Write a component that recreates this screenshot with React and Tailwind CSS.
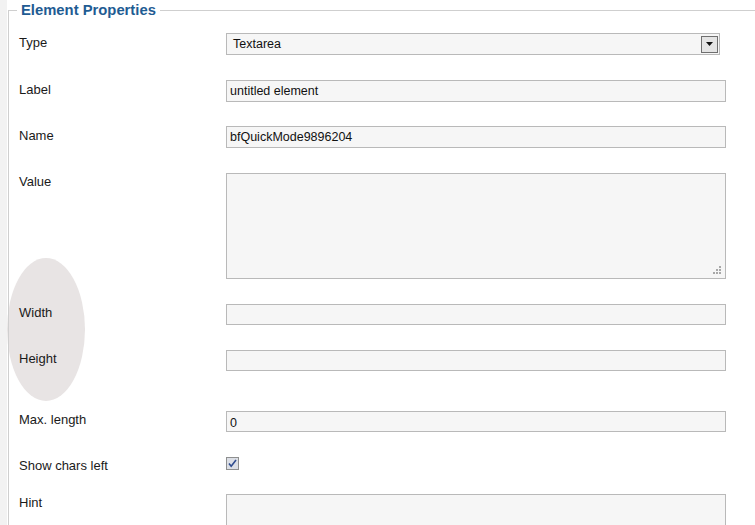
export default function App() {
  const inputBox =
    "h-[22px] w-[500px] border border-[#b9b9b9] bg-[#f6f6f6] px-[3px] text-[12.5px] leading-[21px] text-[#111]";
  const label = "w-[207px] pt-[1px] leading-[16px]";

  return (
    <div className="relative flex h-[525px] w-[755px] overflow-hidden bg-white font-['Liberation_Sans',Arial,sans-serif] text-[13px] text-[#1a1a1a]">
      {/* left gutter */}
      <div className="w-[7px] shrink-0 bg-[#f2f2f2]" />
      <div className="w-px shrink-0 bg-white" />

      {/* highlight annotation */}
      <div className="absolute left-[7px] top-[258px] h-[143px] w-[78px] rounded-[50%] bg-[#e8e4e4]" />

      <fieldset className="relative flex-1 border border-r-0 border-b-0 border-[#cfcfcf]">
        <legend className="ml-[8px] px-[4px] text-[14.8px] font-bold leading-[21px] text-[#1f5c93]">
          Element Properties
        </legend>

        <div className="pl-[10px] pt-[12px]">
          {/* Type */}
          <div className="flex h-[47px] items-start">
            <div className="w-[207px] pt-[2px] leading-[16px]">Type</div>
            <div className="flex h-[22px] w-[494px] items-center justify-between border border-[#b9b9b9] bg-[#f6f6f6] pl-[6px] pr-[1px]">
              <span className="text-[12.5px] text-[#111]">Textarea</span>
              <div className="flex h-[17px] w-[17px] items-center justify-center border border-[#6f6f6f] bg-[#e4e4e4]">
                <svg width="7" height="4" viewBox="0 0 7 4">
                  <path d="M0 0h7L3.5 4z" fill="#111" />
                </svg>
              </div>
            </div>
          </div>

          {/* Label */}
          <div className="flex h-[46px] items-start">
            <div className="w-[207px] pt-[2px] leading-[16px]">Label</div>
            <div className={inputBox}>untitled element</div>
          </div>

          {/* Name */}
          <div className="flex h-[47px] items-start">
            <div className="w-[207px] pt-[2px] leading-[16px]">Name</div>
            <div className={inputBox}>bfQuickMode9896204</div>
          </div>

          {/* Value */}
          <div className="flex h-[131px] items-start">
            <div className={label}>Value</div>
            <div className="relative h-[106px] w-[500px] border border-[#b9b9b9] bg-[#f6f6f6]">
              <svg className="absolute bottom-[3px] right-[3px]" width="10" height="10" viewBox="0 0 10 10">
                <rect x="7" y="1" width="2" height="2" fill="#a8a8a8" />
                <rect x="4" y="4" width="2" height="2" fill="#a8a8a8" />
                <rect x="7" y="4" width="2" height="2" fill="#a8a8a8" />
                <rect x="1" y="7" width="2" height="2" fill="#a8a8a8" />
                <rect x="4" y="7" width="2" height="2" fill="#a8a8a8" />
                <rect x="7" y="7" width="2" height="2" fill="#a8a8a8" />
              </svg>
            </div>
          </div>

          {/* Width */}
          <div className="relative flex h-[46px] items-start">
            <div className={label}>Width</div>
            <div className="h-[21px] w-[500px] border border-[#b9b9b9] bg-[#f6f6f6]" />
          </div>

          {/* Height */}
          <div className="relative flex h-[61px] items-start">
            <div className={label}>Height</div>
            <div className="h-[21px] w-[500px] border border-[#b9b9b9] bg-[#f6f6f6]" />
          </div>

          {/* Max. length */}
          <div className="flex h-[46px] items-start">
            <div className={label}>Max. length</div>
            <div className="h-[21px] w-[500px] border border-[#b9b9b9] bg-[#f6f6f6] px-[3px] text-[12.5px] leading-[22px] text-[#111]">
              0
            </div>
          </div>

          {/* Show chars left */}
          <div className="flex h-[37px] items-start">
            <div className={label}>Show chars left</div>
            <div className="flex h-[13px] w-[13px] items-center justify-center border border-[#8e8f8f] bg-[#dcdfe6]">
              <svg width="9" height="9" viewBox="0 0 9 9">
                <path d="M1 4.5l2.2 2.8L8 1" fill="none" stroke="#2f4c8f" strokeWidth="1.6" />
              </svg>
            </div>
          </div>

          {/* Hint */}
          <div className="flex items-start">
            <div className={label}>Hint</div>
            <div className="h-[80px] w-[500px] border border-[#b9b9b9] bg-[#f6f6f6]" />
          </div>
        </div>
      </fieldset>
    </div>
  );
}
